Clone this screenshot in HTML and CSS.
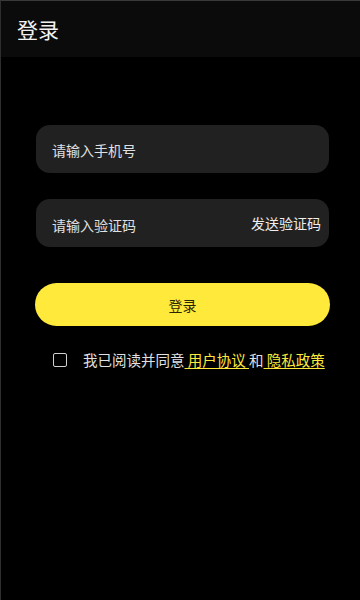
FILE: index.html
```html
<!DOCTYPE html>
<html lang="zh-CN">
<head>
<meta charset="utf-8">
<meta name="viewport" content="width=device-width, initial-scale=1">
<title>登录</title>
<link rel="stylesheet" href="styles.css">
</head>
<body>
<div class="page">
  <header class="header">
    <h1 class="title">登录</h1>
  </header>
  <main class="form">
    <div class="field">
      <span class="placeholder">请输入手机号</span>
    </div>
    <div class="field field-code">
      <span class="placeholder">请输入验证码</span>
      <span class="send">发送验证码</span>
    </div>
    <button class="login" type="button">登录</button>
    <div class="agree">
      <span class="checkbox"></span>
      <span class="agree-text">我已阅读并同意<a class="link">&nbsp;用户协议&nbsp;</a>和<a class="link">&nbsp;隐私政策</a></span>
    </div>
  </main>
</div>
</body>
</html>
```
FILE: styles.css
```css
html, body {
  margin: 0;
  padding: 0;
  background: #000;
}
body {
  font-family: "Noto Sans CJK SC", "Noto Sans", sans-serif;
  color: #e6e6e6;
}
.page {
  min-height: 599px;
  border-top: 1px solid #3a3a3a;
  border-left: 1px solid #2e2e2e;
  background: #000;
}
.header {
  height: 56px;
  background: #0b0b0b;
  display: flex;
  align-items: center;
  padding-left: 16px;
}
.title {
  margin: 0;
  font-size: 21px;
  font-weight: 400;
  color: #f2f2f2;
  line-height: 24px;
  margin-top: -1px;
}
.form {
  padding: 68px 31px 0 35px;
  display: flex;
  flex-direction: column;
}
.field {
  height: 48px;
  border-radius: 14px;
  background: #212121;
  display: flex;
  align-items: center;
  justify-content: space-between;
  padding: 0 8px 0 16px;
  font-size: 14px;
  line-height: 20px;
}
.field + .field {
  margin-top: 26px;
}
.placeholder {
  color: #e0e0e0;
  margin-top: 1px;
}
.field-code .placeholder {
  margin-top: 4px;
}
.send {
  color: #eeeeee;
  margin-top: -1px;
}
.login {
  margin: 36px -1px 0 -1px;
  height: 43px;
  border: none;
  border-radius: 22px;
  background: #ffe93b;
  color: #2a2400;
  font-family: inherit;
  font-size: 14px;
  line-height: 20px;
  padding: 0;
}
.agree {
  margin-top: 25px;
  display: flex;
  align-items: center;
  padding-left: 17px;
  font-size: 14.5px;
  line-height: 18px;
}
.checkbox {
  width: 12px;
  height: 12px;
  border: 1.5px solid #d0d0d0;
  border-radius: 2px;
  flex: none;
}
.agree-text {
  margin-left: 16px;
  color: #e0e0e0;
  white-space: nowrap;
}
.link {
  color: #ffe93b;
  text-decoration: underline;
  text-underline-offset: 2px;
}
```
